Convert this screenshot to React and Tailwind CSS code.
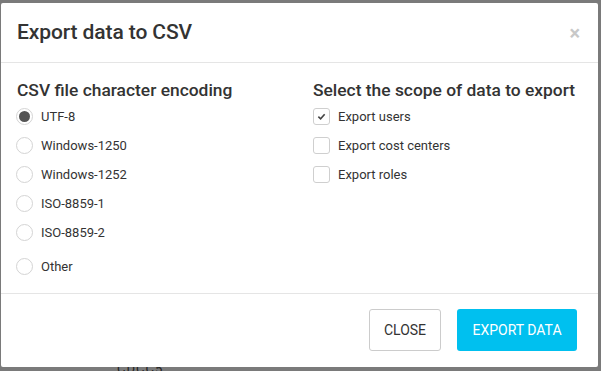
import { useState } from "react";

const encodings = ["UTF-8", "Windows-1250", "Windows-1252", "ISO-8859-1", "ISO-8859-2"];
const scopes = [
  { id: "users", label: "Export users" },
  { id: "costCenters", label: "Export cost centers" },
  { id: "roles", label: "Export roles" },
];

function Radio({ checked, label, onSelect, className = "" }) {
  return (
    <label onClick={onSelect} className={"flex items-center h-[29px] cursor-pointer " + className}>
      <span className="w-[17px] h-[17px] rounded-full border border-[#d4d4d4] flex items-center justify-center bg-white">
        {checked && <span className="w-[11px] h-[11px] rounded-full bg-[#555]" />}
      </span>
      <span className="ml-[8px] text-[13px] text-[#333]">{label}</span>
    </label>
  );
}

function Checkbox({ checked, label, onToggle }) {
  return (
    <label onClick={onToggle} className="flex items-center h-[29px] cursor-pointer">
      <span className="w-[17px] h-[17px] rounded-[3px] border border-[#cfcfcf] flex items-center justify-center bg-white">
        {checked && (
          <svg width="9" height="9" viewBox="0 0 10 10">
            <path d="M1.5 5.2 L4 7.5 L8.5 2.5" fill="none" stroke="#444" strokeWidth="1.8" />
          </svg>
        )}
      </span>
      <span className="ml-[8px] text-[13px] text-[#333]">{label}</span>
    </label>
  );
}

export default function App() {
  const [encoding, setEncoding] = useState("UTF-8");
  const [scope, setScope] = useState({ users: true, costCenters: false, roles: false });

  return (
    <div className="relative h-[371px] w-[601px] bg-[#7a7a7a] pt-[3px] pl-[1px] overflow-hidden font-['Roboto',sans-serif]">
      <span className="absolute left-[117px] top-[362px] text-[13px] leading-[13px] text-[#222] tracking-[1px] font-['Roboto',sans-serif]">CDCC5</span>
      <div className="relative w-[597px] h-[364px] bg-white rounded-[2px] flex flex-col">
        <div className="h-[60px] flex items-center justify-between pl-[16px] pr-[18px] border-b border-[#e5e5e5]">
          <h1 className="text-[21px] font-medium text-[#333] tracking-[-0.1px]">Export data to CSV</h1>
          <button className="text-[#c8c8c8] text-[20px] leading-none font-bold">×</button>
        </div>
        <div className="flex-1 flex pl-[15px] pt-[16px] border-b border-[#e5e5e5]">
          <div className="w-[297px]">
            <h2 className="text-[17.4px] leading-[23px] font-medium text-[#333] ml-[1px]">CSV file character encoding</h2>
            {encodings.map((e) => (
              <Radio key={e} label={e} checked={encoding === e} onSelect={() => setEncoding(e)} />
            ))}
            <Radio label="Other" className="mt-[5px]" checked={encoding === "Other"} onSelect={() => setEncoding("Other")} />
          </div>
          <div>
            <h2 className="text-[17.4px] leading-[23px] font-medium text-[#333]">Select the scope of data to export</h2>
            {scopes.map((s) => (
              <Checkbox
                key={s.id}
                label={s.label}
                checked={scope[s.id]}
                onToggle={() => setScope({ ...scope, [s.id]: !scope[s.id] })}
              />
            ))}
          </div>
        </div>
        <div className="h-[73px] flex items-start pt-[15px] justify-end gap-[16px] pr-[21px]">
          <button className="h-[42px] w-[72px] border border-[#ccc] rounded-[3px] text-[14px] text-[#333] bg-white">CLOSE</button>
          <button className="h-[42px] w-[120px] rounded-[3px] text-[14px] text-white bg-[#00c0ef]">EXPORT DATA</button>
        </div>
      </div>
    </div>
  );
}
